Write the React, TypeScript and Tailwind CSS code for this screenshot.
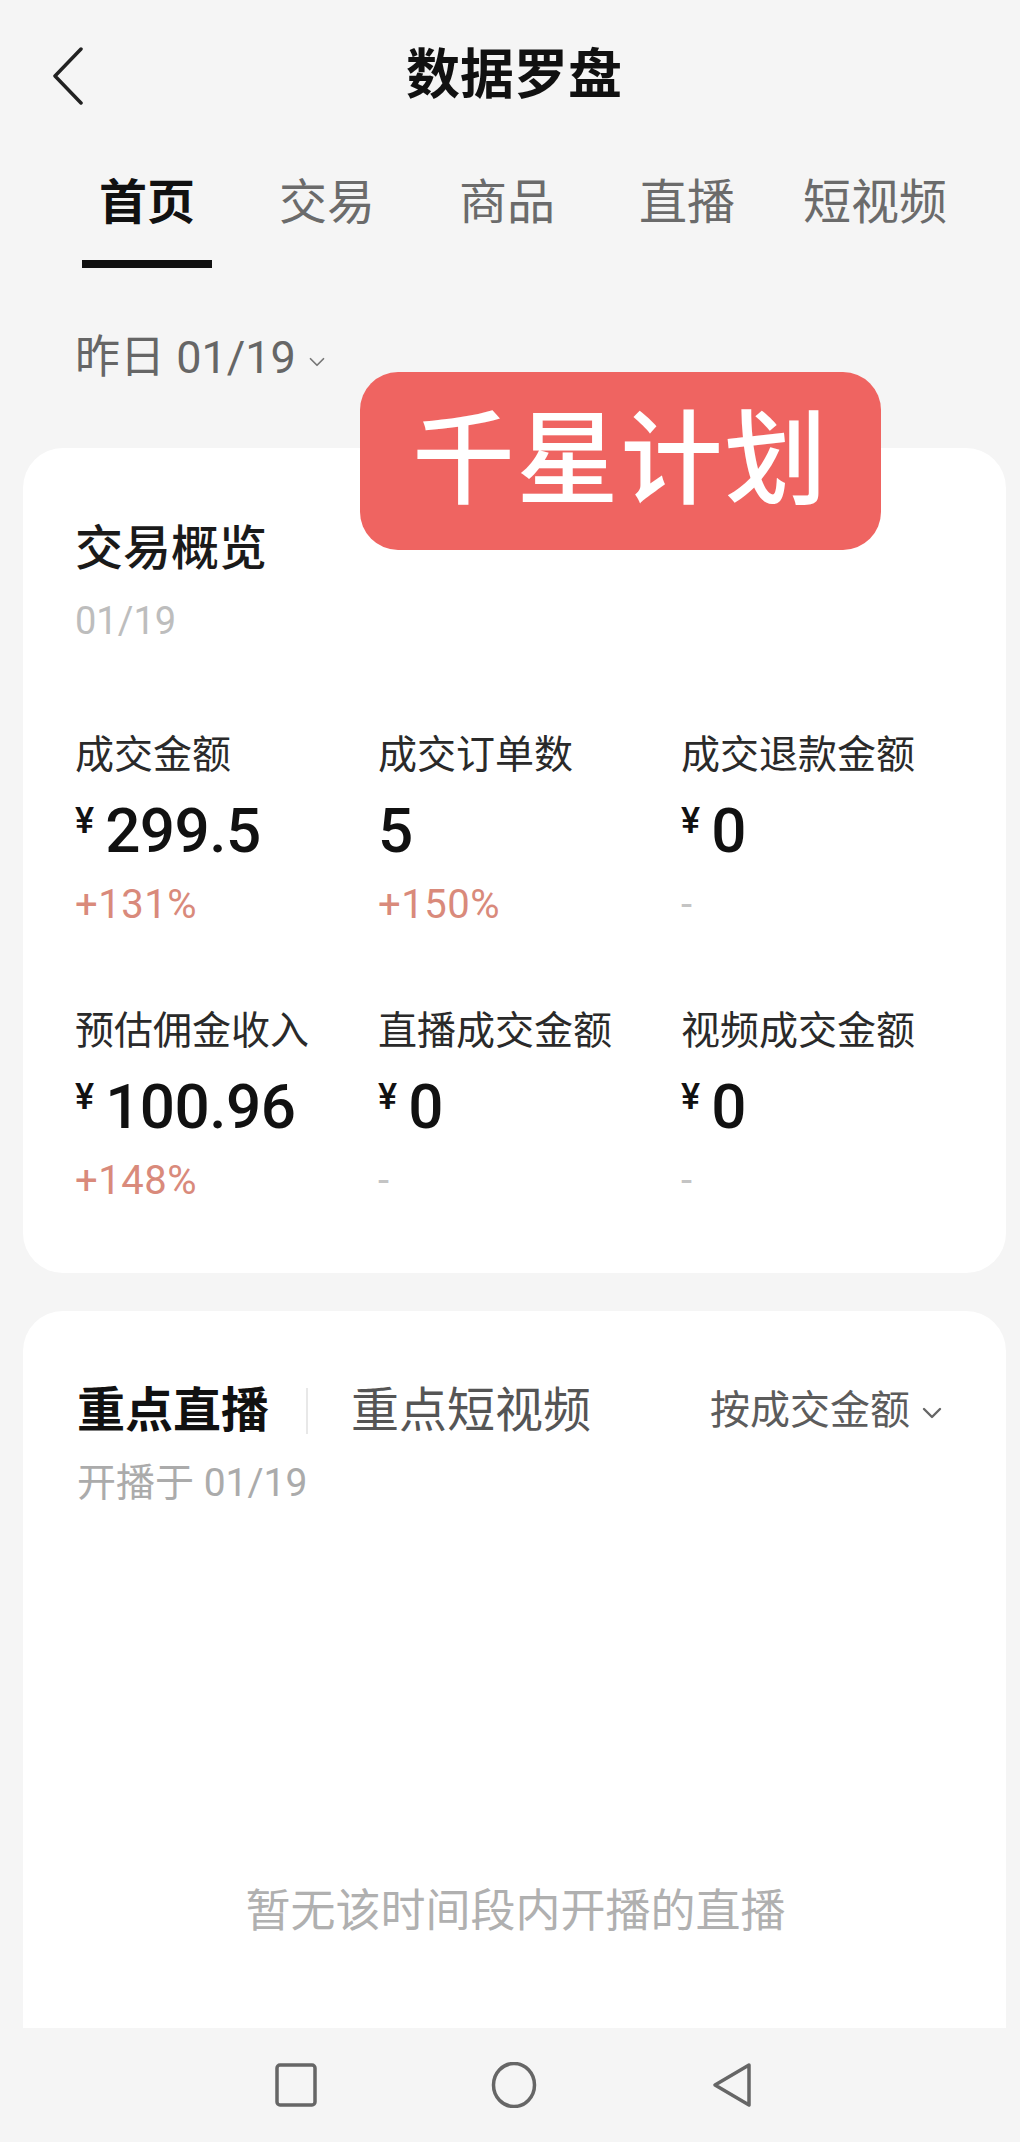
import { ChevronDown } from 'lucide-react';

type Metric = {
  label: string;
  value: string;
  money: boolean;
  change: string | null;
};

const TABS = ['首页', '交易', '商品', '直播', '短视频'];

const ROW_ONE: Metric[] = [
  { label: '成交金额', value: '299.5', money: true, change: '+131%' },
  { label: '成交订单数', value: '5', money: false, change: '+150%' },
  { label: '成交退款金额', value: '0', money: true, change: null },
];

const ROW_TWO: Metric[] = [
  { label: '预估佣金收入', value: '100.96', money: true, change: '+148%' },
  { label: '直播成交金额', value: '0', money: true, change: null },
  { label: '视频成交金额', value: '0', money: true, change: null },
];

function MetricCell({ metric }: { metric: Metric }) {
  return (
    <div className="flex flex-col">
      <div className="text-[39px] leading-none text-[#2a2a2a]">{metric.label}</div>
      <div className="mt-[25px] flex items-start text-[#111]">
        {metric.money && (
          <span className="mt-[3px] mr-[11px] text-[36px] leading-none font-medium">¥</span>
        )}
        <span className="text-[62px] leading-none font-medium tracking-[-0.5px]">{metric.value}</span>
      </div>
      {metric.change ? (
        <div className="mt-[23px] text-[40px] leading-none tracking-[0.5px] text-[#d98a7b]">{metric.change}</div>
      ) : (
        <div className="mt-[23px] text-[40px] leading-none text-[#c4c4c4]">-</div>
      )}
    </div>
  );
}

export default function App() {
  return (
    <div
      className="relative h-[2142px] w-[1020px] overflow-hidden bg-[#f5f5f5]"
      style={{ fontFamily: 'Roboto, "Noto Sans CJK SC", sans-serif' }}
    >
      {/* HEADER */}
      <div className="grid h-[152px] grid-cols-[1fr_auto_1fr] items-center">
        <div className="pl-[51px]">
          <svg width="34" height="58" viewBox="0 0 34 58" fill="none">
            <polyline
              points="30,2 4,29 30,56"
              stroke="#222"
              strokeWidth="3.5"
              strokeLinecap="round"
              strokeLinejoin="round"
            />
          </svg>
        </div>
        <div className="pl-[8px] text-[54px] leading-none font-bold text-[#111]">数据罗盘</div>
        <div />
      </div>

      {/* TABS */}
      <div className="ml-[57px] grid w-[900px] grid-cols-[180px_180px_180px_180px_1fr] pt-[27px]">
        {TABS.map((tab, i) => (
          <div key={tab} className="flex flex-col items-center">
            <div
              className={
                i === 0
                  ? 'text-[48px] leading-none font-bold text-[#111]'
                  : i === 4
                    ? 'pl-[16px] text-[48px] leading-none text-[#6b6b6b]'
                    : 'text-[48px] leading-none text-[#6b6b6b]'
              }
            >
              {tab}
            </div>
            {i === 0 && <div className="mt-[33px] h-[8px] w-[130px] bg-[#111]" />}
          </div>
        ))}
      </div>

      {/* DATE */}
      <div className="mt-[67px] flex items-center pl-[75px] text-[45px] leading-none text-[#666]">
        <span>昨日 01/19</span>
        <ChevronDown className="ml-[8px] mt-[8px]" size={26} strokeWidth={1.6} color="#777" />
      </div>

      {/* TRADE OVERVIEW */}
      <div className="mt-[68px] ml-[23px] mr-[14px] rounded-[40px] bg-white px-[52px] pt-[77px] pb-[72px]">
        <div className="text-[48px] leading-none font-medium text-[#1a1a1a]">交易概览</div>
        <div className="mt-[29px] text-[38px] leading-none text-[#bdbdbd]">01/19</div>

        <div className="mt-[96px] grid grid-cols-[303px_303px_1fr]">
          {ROW_ONE.map((m) => (
            <MetricCell key={m.label} metric={m} />
          ))}
        </div>
        <div className="mt-[87px] grid grid-cols-[303px_303px_1fr]">
          {ROW_TWO.map((m) => (
            <MetricCell key={m.label} metric={m} />
          ))}
        </div>
      </div>

      {/* KEY LIVE */}
      <div className="mt-[38px] ml-[23px] mr-[14px] flex h-[717px] flex-col rounded-t-[40px] bg-white pl-[54px] pr-[58px] pt-[76px]">
        <div className="flex items-center">
          <span className="text-[48px] leading-none font-bold text-[#111]">重点直播</span>
          <span className="ml-[37px] h-[46px] w-[2px] bg-[#e8e8e8]" />
          <span className="ml-[43px] text-[48px] leading-none text-[#555]">重点短视频</span>
          <div className="ml-auto flex items-center text-[40px] leading-none text-[#5c5c5c]">
            <span>按成交金额</span>
            <ChevronDown className="ml-[6px] mt-[4px]" size={32} strokeWidth={1.8} color="#666" />
          </div>
        </div>
        <div className="mt-[29px] text-[39px] leading-none text-[#ababab]">开播于 01/19</div>
        <div className="mt-[386px] pl-[6px] text-center text-[45px] leading-none text-[#b0b0b0]">
          暂无该时间段内开播的直播
        </div>
      </div>

      {/* NAV BAR */}
      <div className="flex h-[114px] items-center justify-center gap-[173px] pl-[8px]">
        <svg width="44" height="44" viewBox="0 0 44 44" fill="none">
          <rect x="3" y="2" width="38" height="40" rx="3" stroke="#666" strokeWidth="3.5" />
        </svg>
        <svg width="46" height="46" viewBox="0 0 46 46" fill="none">
          <ellipse cx="23" cy="23" rx="20.5" ry="21.5" stroke="#666" strokeWidth="3.5" />
        </svg>
        <svg width="44" height="46" viewBox="0 0 44 46" fill="none">
          <path
            d="M39 3 L5 23 L39 43 Z"
            stroke="#666"
            strokeWidth="3.5"
            strokeLinejoin="round"
          />
        </svg>
      </div>

      {/* WATERMARK BADGE */}
      <div className="absolute left-[360px] top-[372px] flex h-[178px] w-[521px] items-center justify-center rounded-[38px] bg-[#ef6461]">
        <span className="text-[102px] leading-none font-medium tracking-[2px] text-white">
          千星计划
        </span>
      </div>
    </div>
  );
}
